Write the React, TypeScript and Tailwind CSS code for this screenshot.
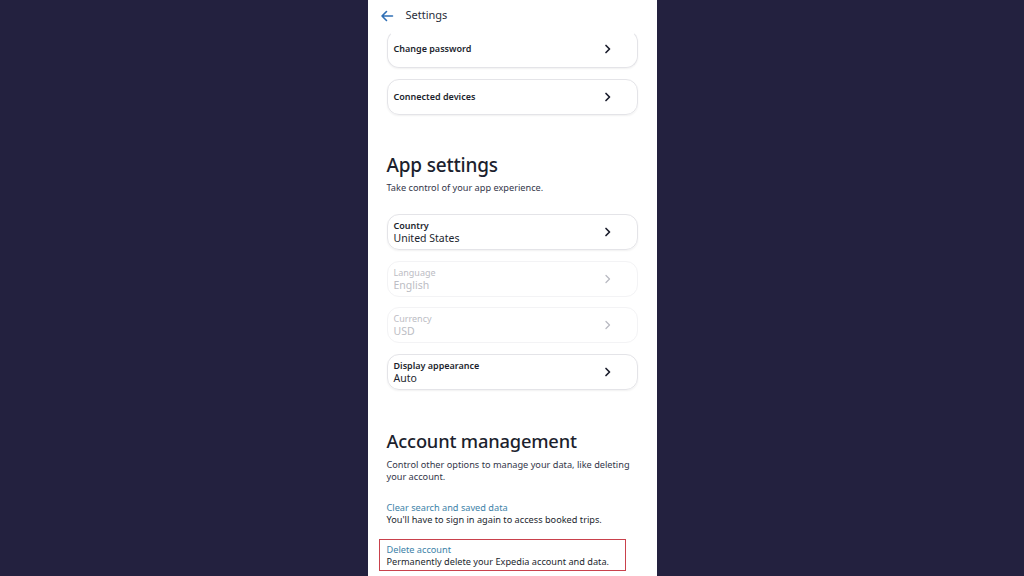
import type { ReactNode } from "react";

const FONT = { fontFamily: '"Noto Sans", "Open Sans", sans-serif' };

function Chevron({ faded }: { faded?: boolean }) {
  return (
    <svg width="10" height="10" viewBox="0 0 10 10" className="shrink-0">
      <path
        d="M3 1.5 L6.5 5 L3 8.5"
        fill="none"
        stroke={faded ? "#b9bac2" : "#1c1f2e"}
        strokeWidth={faded ? 1.3 : 1.7}
        strokeLinecap="round"
        strokeLinejoin="round"
      />
    </svg>
  );
}

type RowProps = {
  label: ReactNode;
  value?: ReactNode;
  faded?: boolean;
  className?: string;
};

// Rounded settings row, optional second line for the current value.
function Row({ label, value, faded, className = "" }: RowProps) {
  return (
    <div
      className={`flex items-center justify-between h-[36px] pl-[6px] pr-[24px] rounded-[12px] border ${
        faded ? "border-[#f3f3f5]" : "border-[#e4e4e8] shadow-[0_1px_2px_rgba(0,0,0,0.06)]"
      } ${className}`}
    >
      <div className="flex flex-col">
        <span
          className={`text-[9px] leading-[12px] ${
            faded ? "text-[#bcbdc4] font-normal" : "text-[#1c1f2e] font-semibold"
          }`}
        >
          {label}
        </span>
        {value && (
          <span className={`text-[10.5px] leading-[12px] ${faded ? "text-[#bcbdc4]" : "text-[#1c1f2e]"}`}>
            {value}
          </span>
        )}
      </div>
      <Chevron faded={faded} />
    </div>
  );
}

export default function App() {
  return (
    <div className="w-[1024px] h-[576px] bg-[#23213f] flex justify-center overflow-hidden" style={FONT}>
      <div className="w-[289px] h-full bg-white flex flex-col overflow-hidden">
        <div className="relative z-10 h-[31px] shrink-0 bg-white flex items-center pl-[12px] -mb-[1px]">
          <svg width="14" height="14" viewBox="0 0 14 14">
            <path
              d="M12.5 7 H2 M6.5 2.5 L2 7 L6.5 11.5"
              fill="none"
              stroke="#2f6fb5"
              strokeWidth="1.6"
              strokeLinecap="round"
              strokeLinejoin="round"
            />
          </svg>
          <span className="ml-[12px] text-[11px] text-[#2a2d3a]">Settings</span>
        </div>

        <div className="px-[19px] text-[#1c1f2e]">
          <Row label="Change password" className="h-[38px] border-t-transparent" />
          <Row label="Connected devices" className="mt-[11px]" />

          <h2 className="mt-[38px] text-[19px] leading-[24px] font-medium tracking-[-0.01em]">App settings</h2>
          <p className="mt-[5px] text-[9.2px] leading-[12px] text-[#33364a]">Take control of your app experience.</p>

          <Row label="Country" value="United States" className="mt-[20px]" />
          <Row label="Language" value="English" faded className="mt-[11px]" />
          <Row label="Currency" value="USD" faded className="mt-[10px]" />
          <Row label="Display appearance" value="Auto" className="mt-[11px]" />

          <h2 className="mt-[39px] text-[18.3px] leading-[24px] font-medium tracking-[-0.01em]">
            Account management
          </h2>
          <p className="mt-[6px] text-[9.2px] leading-[12px] text-[#33364a]">
            Control other options to manage your data, like deleting your account.
          </p>

          <div className="mt-[19px] text-[9.2px] leading-[11.5px]">
            <p className="text-[#3d82a8]">Clear search and saved data</p>
            <p className="text-[#1c1f2e]">You'll have to sign in again to access booked trips.</p>
          </div>

          <div className="mt-[14px] -ml-[8px] w-[247px] border-[1.5px] border-[#c9414c] pl-[7px] pt-[4px] pb-[2px] text-[9.2px] leading-[12px]">
            <p className="text-[#3d82a8]">Delete account</p>
            <p className="text-[#1c1f2e]">Permanently delete your Expedia account and data.</p>
          </div>
        </div>
      </div>
    </div>
  );
}
